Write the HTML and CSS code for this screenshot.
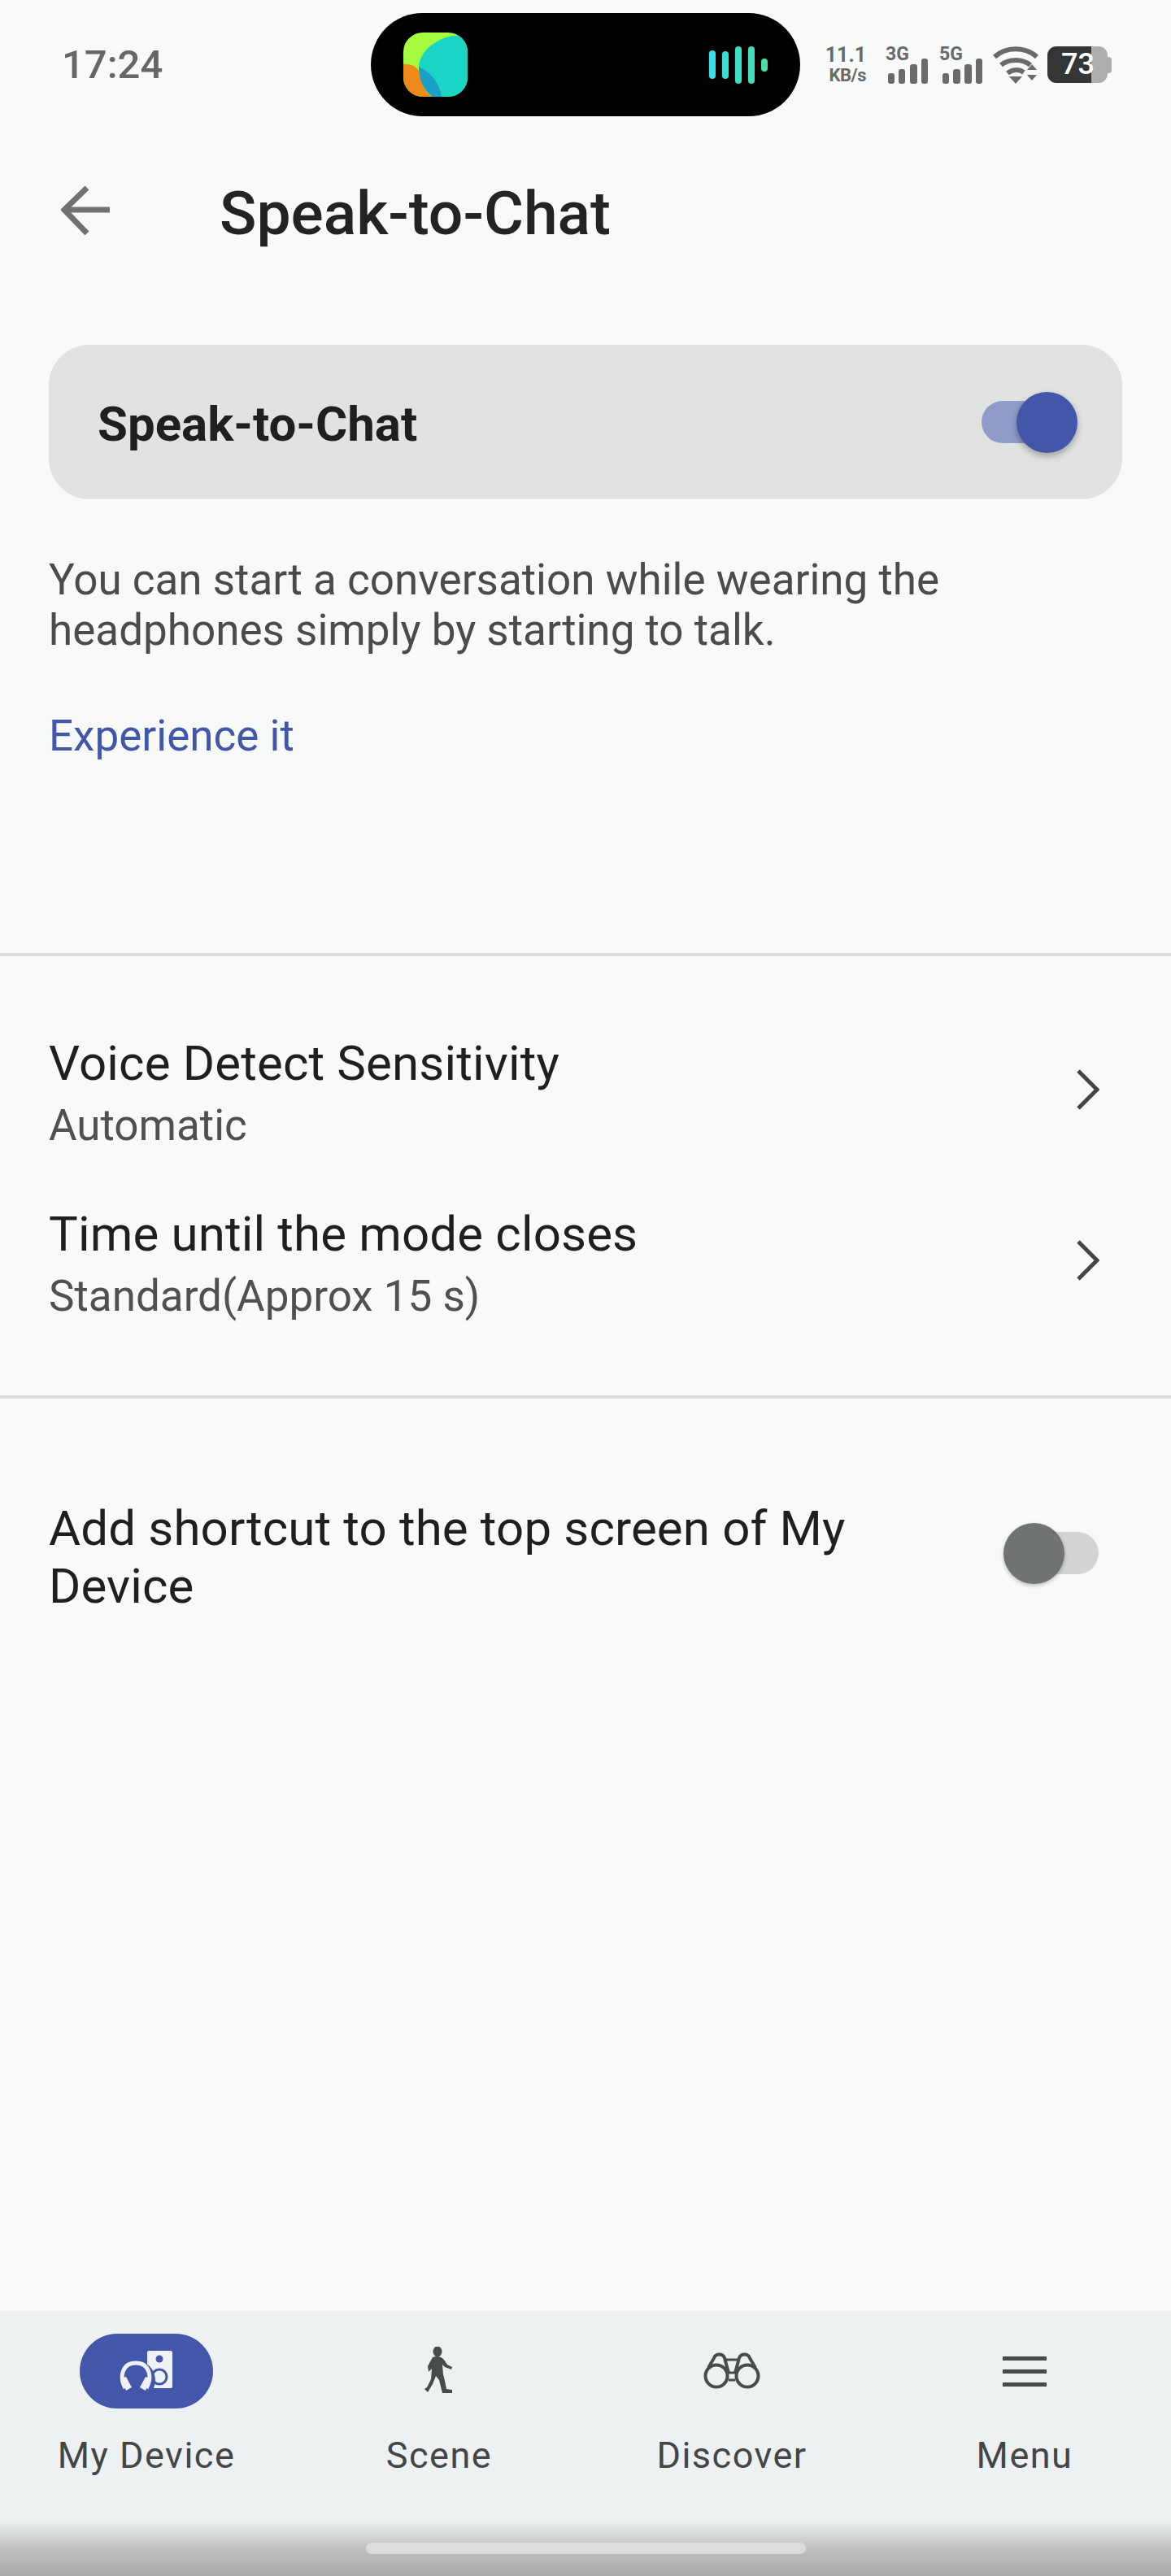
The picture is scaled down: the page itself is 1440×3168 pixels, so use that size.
FILE: index.html
```html
<!DOCTYPE html>
<html lang="en">
<head>
<meta charset="utf-8">
<title>Speak-to-Chat</title>
<link rel="stylesheet" href="styles.css">
</head>
<body>
<div class="screen">
  <div class="statusbar">
    <span class="time">17:24</span>
    <div class="island">
      <svg class="app-icon" width="79" height="79" viewBox="0 0 79 79">
        <defs><clipPath id="sq"><rect width="79" height="79" rx="24"/></clipPath></defs>
        <g clip-path="url(#sq)">
          <rect width="79" height="79" fill="#a5fb3f"/>
          <path d="M0 39C14 38 20 44 23 60C25 70 30 76 36 79H0Z" fill="#ee8a1c"/>
          <path d="M79 8C70 2 60 3 50 7C30 15 20 28 19 42C19 56 25 72 36 79H79Z" fill="#1ad4c6"/>
          <path d="M19 42C32 48 44 60 47 79H36C25 72 19 56 19 42Z" fill="#1a9fc9"/>
        </g>
      </svg>
      <div class="wave">
        <span class="wave-bar wave-1"></span>
        <span class="wave-bar wave-2"></span>
        <span class="wave-bar wave-3"></span>
        <span class="wave-bar wave-4"></span>
        <span class="wave-bar wave-5"></span>
      </div>
    </div>
    <div class="indicators">
      <div class="speed"><span class="speed-val">11.1</span><span class="speed-unit">KB/s</span></div>
      <svg class="signal" width="50" height="46" viewBox="0 0 50 46">
        <text x="-2" y="17" class="net">3G</text>
        <rect x="1" y="33" width="8" height="13" rx="3"/><rect x="14" y="28" width="8" height="18" rx="3"/><rect x="28" y="22" width="9" height="24" rx="3"/><rect x="42" y="15" width="8" height="31" rx="3"/>
      </svg>
      <svg class="signal signal-5g" width="50" height="46" viewBox="0 0 50 46">
        <text x="-3" y="17" class="net">5G</text>
        <rect x="1" y="33" width="8" height="13" rx="3"/><rect x="14" y="28" width="9" height="18" rx="3"/><rect x="28" y="22" width="9" height="24" rx="3"/><rect x="42" y="15" width="8" height="31" rx="3"/>
      </svg>
      <svg class="wifi" width="56" height="46" viewBox="0 0 56 46" fill="none" stroke="#696b6b" stroke-width="6">
        <path d="M2 13C16 0 40 0 54 13"/>
        <path d="M10 23C20 15 36 15 46 23"/>
        <path d="M18 33C24 28 32 28 38 32"/>
        <path d="M20 37H36L28 46Z" fill="#696b6b" stroke="none"/>
        <path d="M42 29L48 22L54 29Z M42 35H54L48 42Z" fill="#696b6b" stroke="none"/>
      </svg>
      <div class="battery">
        <span class="battery-level">73</span>
      </div>
    </div>
  </div>

  <header class="appbar">
    <svg class="back" width="60" height="60" viewBox="0 0 60 60" fill="none" stroke="#707272" stroke-width="7">
      <path d="M60 29H4"/><path d="M32 2L4 29L32 58" stroke-linejoin="miter"/>
    </svg>
    <h1 class="title">Speak-to-Chat</h1>
  </header>

  <main class="content">
    <section class="intro">
      <div class="card">
        <span class="card-label">Speak-to-Chat</span>
        <span class="switch switch-on"><span class="thumb"></span></span>
      </div>
      <p class="desc">You can start a conversation while wearing the headphones simply by starting to talk.</p>
      <a class="link">Experience it</a>
    </section>

    <section class="settings">
      <div class="row">
        <div class="row-text">
          <div class="row-title">Voice Detect Sensitivity</div>
          <div class="row-sub">Automatic</div>
        </div>
        <svg class="chev" width="28" height="50" viewBox="0 0 28 50" fill="none" stroke="#444646" stroke-width="5"><path d="M2 2L25 25L2 48"/></svg>
      </div>
      <div class="row">
        <div class="row-text">
          <div class="row-title">Time until the mode closes</div>
          <div class="row-sub">Standard(Approx 15 s)</div>
        </div>
        <svg class="chev" width="28" height="50" viewBox="0 0 28 50" fill="none" stroke="#444646" stroke-width="5"><path d="M2 2L25 25L2 48"/></svg>
      </div>
    </section>

    <section class="shortcut">
      <div class="shortcut-text">Add shortcut to the top screen of My Device</div>
      <span class="switch switch-off"><span class="thumb"></span></span>
    </section>
  </main>

  <nav class="tabbar">
    <div class="tabs">
      <div class="tab">
        <div class="tab-icon tab-icon-active">
          <svg width="68" height="52" viewBox="0 0 68 52">
            <rect x="35" y="1" width="31" height="46" rx="2" fill="#eef1f6"/>
            <circle cx="50" cy="11" r="4.500" fill="#4356a9"/>
            <circle cx="50" cy="33" r="9" fill="none" stroke="#4356a9" stroke-width="3"/>
            <circle cx="21" cy="37" r="24" fill="#4356a9"/>
            <path d="M8 47C0 32 5 16 21 16C37 16 42 32 34 47" fill="none" stroke="#eef1f6" stroke-width="5"/>
            <path d="M3 35L9 33L16 46L9 50Z M39 35L33 33L26 46L33 50Z" fill="#eef1f6"/>
          </svg>
        </div>
        <span class="tab-label">My Device</span>
      </div>
      <div class="tab">
        <div class="tab-icon">
          <svg width="36" height="60" viewBox="0 0 36 60" fill="#474b4a">
            <ellipse cx="16" cy="6" rx="5.500" ry="6.500"/>
            <path d="M10 13C15 11 21 12 24 16L28 22L34 25L33 28L25 25L22 22L23 34L25 42L27 52L34 53L34 57L22 57L18 41L14 36L10 46L4 56L0 52L3 50L8 40L9 27L5 31L4 24Z"/>
          </svg>
        </div>
        <span class="tab-label">Scene</span>
      </div>
      <div class="tab">
        <div class="tab-icon">
          <svg width="70" height="46" viewBox="0 0 70 46" fill="none" stroke="#474b4a" stroke-width="4">
            <circle cx="16" cy="29" r="13.500"/><circle cx="54" cy="29" r="13.500"/>
            <path d="M6 19L13 7C15 1 24 1 26 7L31 25"/><path d="M64 19L57 7C55 1 46 1 44 7L39 25"/>
            <path d="M26 9H44M31 25H39M31 34H39" stroke-width="3"/>
          </svg>
        </div>
        <span class="tab-label">Discover</span>
      </div>
      <div class="tab">
        <div class="tab-icon">
          <div class="menu-icon"><span></span><span></span><span></span></div>
        </div>
        <span class="tab-label">Menu</span>
      </div>
    </div>
    <div class="home-zone"><span class="home-handle"></span></div>
  </nav>
</div>
</body>
</html>
```

FILE: styles.css
```css
* { box-sizing: border-box; }
html, body { margin: 0; padding: 0; }
body { background: #f8faf9; font-family: Roboto, "Liberation Sans", sans-serif; }

.screen {
  width: 1440px;
  height: 3168px;
  display: flex;
  flex-direction: column;
  background: #f8faf9;
  overflow: hidden;
}

/* Status bar */
.statusbar {
  height: 159px;
  flex: none;
  display: flex;
  align-items: flex-start;
  padding-top: 16px;
}
.time {
  width: 456px;
  padding: 37px 0 0 76px;
  font-size: 49px;
  line-height: 54px;
  font-weight: 500;
  color: #666868;
}
.island {
  width: 528px;
  height: 127px;
  flex: none;
  background: #000;
  border-radius: 64px;
  display: flex;
  align-items: center;
  justify-content: space-between;
  padding: 0 40px;
}
.app-icon { display: block; }
.wave { display: flex; align-items: center; gap: 8px; }
.wave-bar { display: block; width: 8px; border-radius: 4px; }
.wave-1 { height: 35px; background: #36dfe2; }
.wave-2 { height: 34px; background: #37dfd4; }
.wave-3 { height: 46px; background: #3cdec8; }
.wave-4 { height: 46px; background: #42deba; }
.wave-5 { height: 16px; background: #4cdca6; }

.indicators {
  display: flex;
  align-items: flex-start;
  padding-top: 41px;
  margin-left: 32px;
}
.speed {
  width: 49px;
  display: flex;
  flex-direction: column;
  align-items: flex-end;
  color: #696b6b;
  font-weight: 700;
  margin-top: -3px;
}
.speed-val { font-size: 25px; line-height: 27px; }
.speed-unit { font-size: 22px; line-height: 24px; letter-spacing: -0.500px; }
.signal { display: block; margin-left: 26px; overflow: visible; fill: #696b6b; }
.signal-5g { margin-left: 17px; }
.net { font-size: 23px; font-weight: 700; font-family: Roboto, sans-serif; }
.wifi { display: block; margin-left: 13px; }
.battery {
  position: relative;
  width: 74px;
  height: 45px;
  margin: 0 0 0 11px;
  border-radius: 11px;
  background: linear-gradient(90deg, #343535 0, #343535 54px, #adaeae 54px);
  color: #fff;
  font-size: 36px;
  line-height: 45px;
  font-weight: 500;
  padding-left: 17px;
}
.battery::after {
  content: "";
  position: absolute;
  left: 74px;
  top: 13px;
  width: 5px;
  height: 20px;
  border-radius: 0 4px 4px 0;
  background: #adaeae;
}

/* App bar */
.appbar {
  height: 200px;
  flex: none;
  display: flex;
  align-items: center;
  padding-left: 75px;
}
.back { display: block; flex: none; }
.title {
  margin: 6px 0 0 135px;
  font-size: 75px;
  line-height: 84px;
  font-weight: 500;
  color: #222323;
}

/* Content */
.content { flex: 1; display: flex; flex-direction: column; min-height: 0; }
.intro {
  height: 817px;
  padding: 65px 60px 0;
  border-bottom: 4px solid #d9dcda;
}
.card {
  height: 190px;
  background: #e1e3e3;
  border-radius: 50px;
  display: flex;
  align-items: center;
  justify-content: space-between;
  padding: 0 58px 0 60px;
}
.card-label {
  font-size: 60px;
  font-weight: 700;
  line-height: 70px;
  margin-top: 6px;
  color: #1e1f1f;
}
.desc {
  margin: 68px 0 0;
  font-size: 53px;
  line-height: 62px;
  color: #4a4c4c;
}
.link {
  display: block;
  margin-top: 68px;
  font-size: 53px;
  line-height: 62px;
  color: #4356a9;
}

.switch { position: relative; display: block; height: 52px; border-radius: 26px; flex: none; }
.thumb { position: absolute; display: block; width: 75px; height: 75px; border-radius: 50%; top: -11px; }
.switch-on { width: 111px; background: #8f9bc9; margin-right: 4px; }
.switch-on .thumb { left: 43px; background: #4356a9; box-shadow: 0 4px 8px rgba(0, 0, 0, 0.3); }
.switch-off { width: 117px; background: #d2d3d3; }
.switch-off .thumb { left: 0; background: #6f7373; box-shadow: 0 2px 5px rgba(0, 0, 0, 0.25); }

.settings {
  height: 544px;
  padding: 94px 88px 0 60px;
  border-bottom: 4px solid #d9dcda;
}
.row {
  height: 210px;
  display: flex;
  align-items: flex-start;
  justify-content: space-between;
}
.row-title { font-size: 60px; line-height: 76px; letter-spacing: 0.150px; color: #1e2020; }
.row-sub { font-size: 53px; line-height: 76px; color: #4f5151; }
.chev { display: block; margin-top: 45px; }

.shortcut {
  display: flex;
  align-items: flex-start;
  justify-content: space-between;
  padding: 124px 89px 0 60px;
}
.shortcut-text {
  width: 1020px;
  font-size: 60px;
  line-height: 71px;
  letter-spacing: 0.150px;
  color: #1e2020;
}
.shortcut .switch { margin-top: 40px; }

/* Tab bar */
.tabbar {
  height: 326px;
  flex: none;
  background: #edf1f2;
  display: flex;
  flex-direction: column;
}
.tabs { display: grid; grid-template-columns: repeat(4, 360px); padding-top: 28px; }
.tab { display: flex; flex-direction: column; align-items: center; }
.tab-icon { width: 164px; height: 92px; display: flex; align-items: center; justify-content: center; }
.tab-icon-active { background: #4356a9; border-radius: 46px; }
.tab-label {
  margin-top: 32px;
  font-size: 45px;
  line-height: 52px;
  letter-spacing: 1.500px;
  color: #444646;
}
.menu-icon { display: flex; flex-direction: column; gap: 11px; }
.menu-icon span { display: block; width: 54px; height: 5px; background: #474b4a; }

.home-zone {
  height: 68px;
  margin-top: auto;
  background: linear-gradient(180deg, #edf1f2 0, #d2d4d4 30%, #bcbebe 55%, #a8a9a9 100%);
  display: flex;
  justify-content: center;
  padding-top: 27px;
}
.home-handle { display: block; width: 541px; height: 14px; border-radius: 7px; background: #dfe0e0; opacity: 0.85; }
```
